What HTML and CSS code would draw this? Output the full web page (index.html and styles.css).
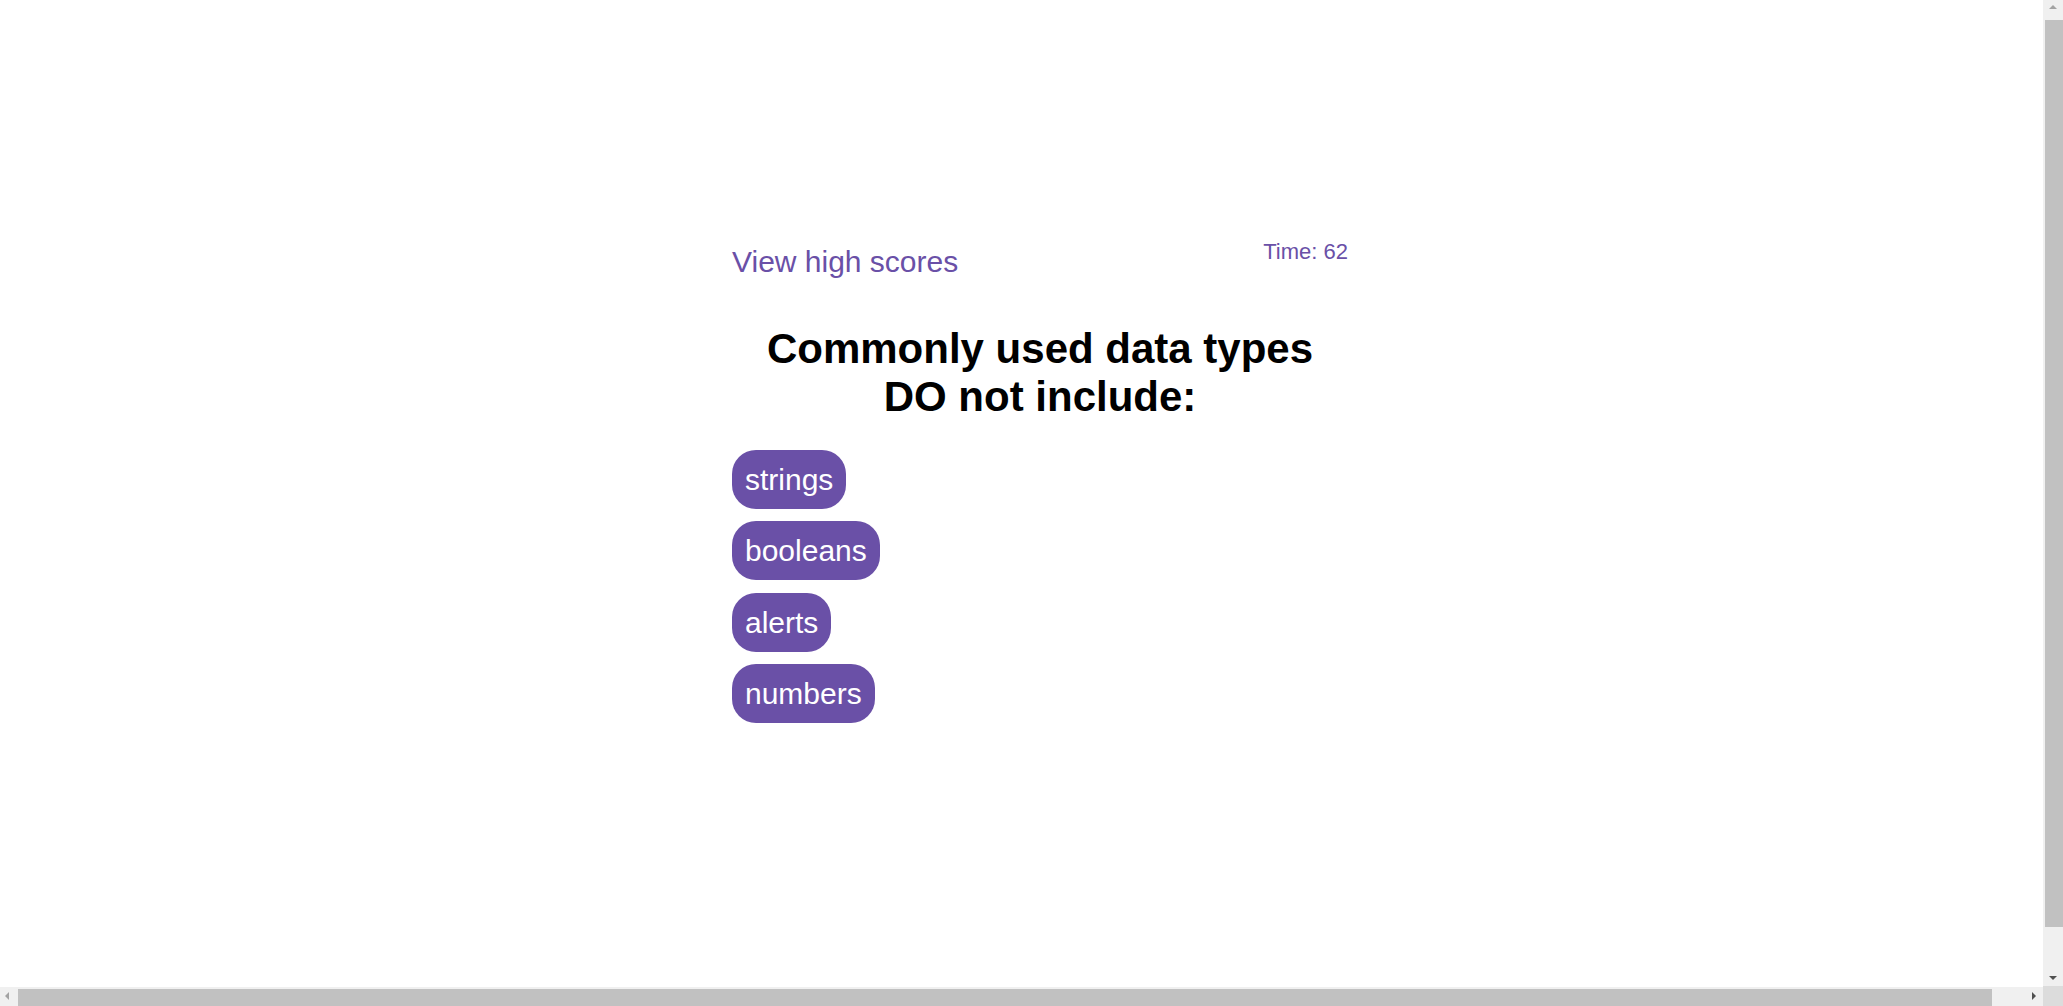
FILE: index.html
```html
<!DOCTYPE html>
<html lang="en">
<head>
<meta charset="utf-8">
<title>Code Quiz</title>
<link rel="stylesheet" href="styles.css">
</head>
<body>
<main class="page">
  <header class="topbar">
    <a class="highscores" href="#">View high scores</a>
    <div class="timer">Time: 62</div>
  </header>
  <section class="question">
    <h1 class="question-title">Commonly used data types<br>DO not include:</h1>
    <div class="choices">
      <button class="choice">strings</button>
      <button class="choice">booleans</button>
      <button class="choice">alerts</button>
      <button class="choice">numbers</button>
    </div>
  </section>
</main>
<div class="vscroll">
  <div class="arrow arrow-up"></div>
  <div class="vthumb"></div>
  <div class="arrow arrow-down"></div>
</div>
<div class="hscroll">
  <div class="arrow arrow-left"></div>
  <div class="hthumb"></div>
  <div class="arrow arrow-right"></div>
</div>
<div class="corner"></div>
</body>
</html>
```
FILE: styles.css
```css
html, body {
  margin: 0;
  padding: 0;
  background: #ffffff;
}
body {
  font-family: "Liberation Sans", Arial, sans-serif;
  overflow: hidden;
  width: 2063px;
  height: 1006px;
}
.page {
  width: 616px;
  margin-left: 732px;
  padding-top: 239px;
}
.topbar {
  display: flex;
  justify-content: space-between;
  align-items: flex-start;
}
.highscores {
  color: #6a50a7;
  text-decoration: none;
  font-size: 30px;
  margin-top: 5.5px;
}
.timer {
  color: #6a50a7;
  font-size: 22px;
}
.question-title {
  margin: 46.5px 0 0 0;
  font-size: 42px;
  line-height: 48px;
  font-weight: bold;
  color: #000;
  text-align: center;
}
.choices {
  display: flex;
  flex-direction: column;
  align-items: flex-start;
  gap: 12.5px;
  margin-top: 28.5px;
}
.choice {
  font-family: "Liberation Sans", Arial, sans-serif;
  font-size: 30px;
  line-height: 35px;
  padding: 12px 13px;
  border: none;
  border-radius: 24px;
  background: #6a50a7;
  color: #ffffff;
  cursor: pointer;
}
.vscroll {
  position: fixed;
  top: 0;
  right: 0;
  width: 20px;
  height: 986px;
  background: #f0f0f0;
}
.vthumb {
  position: absolute;
  left: 2px;
  right: 0;
  top: 20px;
  height: 907px;
  background: #c1c1c1;
}
.hscroll {
  position: fixed;
  left: 0;
  bottom: 0;
  width: 2043px;
  height: 19px;
  background: #f0f0f0;
}
.hthumb {
  position: absolute;
  left: 18px;
  top: 2px;
  bottom: 0;
  width: 1974px;
  background: #c1c1c1;
}
.corner {
  position: fixed;
  right: 0;
  bottom: 0;
  width: 20px;
  height: 20px;
  background: #dcdcdc;
}
.arrow {
  position: absolute;
  width: 0;
  height: 0;
}
.arrow-up {
  left: 6px;
  top: 5px;
  border-left: 4px solid transparent;
  border-right: 4px solid transparent;
  border-bottom: 4px solid #a3a3a3;
}
.arrow-down {
  left: 6px;
  bottom: 6px;
  border-left: 4px solid transparent;
  border-right: 4px solid transparent;
  border-top: 4px solid #505050;
}
.arrow-left {
  left: 5px;
  top: 5px;
  border-top: 4px solid transparent;
  border-bottom: 4px solid transparent;
  border-right: 4px solid #a3a3a3;
}
.arrow-right {
  right: 7px;
  top: 5px;
  border-top: 4px solid transparent;
  border-bottom: 4px solid transparent;
  border-left: 4px solid #505050;
}
```
